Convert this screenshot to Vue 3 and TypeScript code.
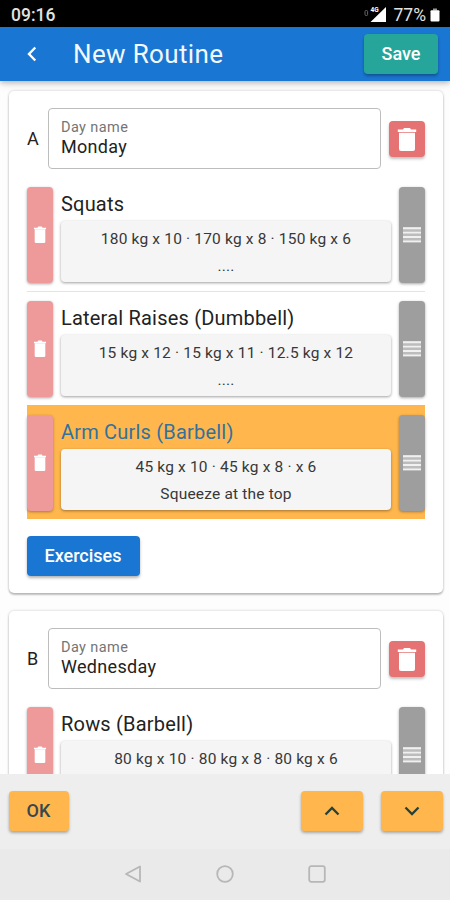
<script setup lang="ts">
interface Exercise {
  name: string
  sets: string
  note: string
  selected?: boolean
}

interface Day {
  letter: string
  name: string
  exercises: Exercise[]
}

const days: Day[] = [
  {
    letter: 'A',
    name: 'Monday',
    exercises: [
      { name: 'Squats', sets: '180 kg x 10 · 170 kg x 8 · 150 kg x 6', note: '....' },
      { name: 'Lateral Raises (Dumbbell)', sets: '15 kg x 12 · 15 kg x 11 · 12.5 kg x 12', note: '....' },
      { name: 'Arm Curls (Barbell)', sets: '45 kg x 10 · 45 kg x 8 · x 6', note: 'Squeeze at the top', selected: true },
    ],
  },
  {
    letter: 'B',
    name: 'Wednesday',
    exercises: [{ name: 'Rows (Barbell)', sets: '80 kg x 10 · 80 kg x 8 · 80 kg x 6', note: '' }],
  },
]
</script>

<template>
  <div class="screen">
    <div class="status">
      <span class="clock">09:16</span>
      <div class="indicators">
        <svg class="signal" viewBox="0 0 24 18" width="24" height="18">
          <rect x="2" y="5.5" width="2.6" height="5" rx="1" fill="none" stroke="#666" />
          <path d="M23 2V17H7.500Z" fill="#fff" />
          <text x="7.500" y="7" class="net">4G</text>
        </svg>
        <span class="percent">77%</span>
        <svg viewBox="0 0 10 14" width="10" height="14">
          <path d="M3 0.500H7V2.500H3Z" fill="#999" />
          <rect x="0.500" y="2.200" width="9" height="11.300" rx="1" fill="#fff" />
        </svg>
      </div>
    </div>

    <header class="appbar">
      <svg class="back" viewBox="0 0 12 16" width="12" height="16">
        <path d="M9.300 1.500L3 8L9.300 14.500" />
      </svg>
      <h1>New Routine</h1>
      <button class="btn save">Save</button>
    </header>

    <main class="content">
      <section v-for="day in days" :key="day.letter" class="card">
        <div class="day">
          <span class="letter">{{ day.letter }}</span>
          <label class="field">
            <span class="label">Day name</span>
            <span class="value">{{ day.name }}</span>
          </label>
          <button class="remove-day" aria-label="Remove day">
            <svg viewBox="0 0 20 24" width="20" height="24">
              <path d="M0.800 2.600H6L7 1H13L14 2.600H19.200V5H0.800Z" />
              <path d="M2 5.800H18V22Q18 24 16 24H4Q2 24 2 22Z" />
            </svg>
          </button>
        </div>

        <div class="rows">
          <div v-for="ex in day.exercises" :key="ex.name" class="row" :class="{ selected: ex.selected }">
            <button class="side remove" aria-label="Remove exercise">
              <svg viewBox="0 0 14 18" width="14" height="18">
                <path d="M1 1.700H4.500L5.200 0.500H8.800L9.500 1.700H13V3.300H1Z" />
                <path d="M1.700 3.300H12.300V15.800Q12.300 17 11.100 17H2.900Q1.700 17 1.700 15.800Z" />
              </svg>
            </button>
            <div class="body">
              <div class="name">{{ ex.name }}</div>
              <div class="sets">
                <div>{{ ex.sets }}</div>
                <div v-if="ex.note" class="note">{{ ex.note }}</div>
              </div>
            </div>
            <button class="side drag" aria-label="Reorder">
              <svg viewBox="0 0 18 16" width="18" height="16">
                <rect width="18" height="15.500" fill="#bcbcbc" />
                <path d="M0 1.200H18M0 5.600H18M0 10H18M0 14.400H18" stroke="#f0f0f0" stroke-width="1.900" />
              </svg>
            </button>
          </div>
        </div>

        <button v-if="day.exercises.length > 1" class="btn add">Exercises</button>
      </section>
    </main>

    <footer class="toolbar">
      <button class="btn amber ok">OK</button>
      <div class="movers">
        <button class="btn amber" aria-label="Move up">
          <svg viewBox="0 0 16 10" width="16" height="10"><path d="M1.500 8.500L8 2L14.500 8.500" /></svg>
        </button>
        <button class="btn amber" aria-label="Move down">
          <svg viewBox="0 0 16 10" width="16" height="10"><path d="M1.500 1.500L8 8L14.500 1.500" /></svg>
        </button>
      </div>
    </footer>

    <nav class="system">
      <svg viewBox="0 0 18 18" width="18" height="18"><path d="M16 1.500V16.500L2 9Z" /></svg>
      <svg viewBox="0 0 18 18" width="18" height="18"><circle cx="9" cy="9" r="7.800" /></svg>
      <svg viewBox="0 0 18 18" width="18" height="18"><rect x="1.200" y="1.200" width="15.600" height="15.600" rx="2" /></svg>
    </nav>
  </div>
</template>

<style>
body {
  margin: 0;
  overflow: hidden;
}
</style>

<style scoped>
.screen {
  width: 450px;
  height: 900px;
  display: flex;
  flex-direction: column;
  overflow: hidden;
  background: #fdfdfd;
  color: #222;
  font-family: Roboto, sans-serif;
}
button {
  border: 0;
  padding: 0;
  margin: 0;
  font-family: inherit;
  display: flex;
  align-items: center;
  justify-content: center;
  flex: none;
}
svg {
  display: block;
  flex: none;
}
.status {
  flex: none;
  height: 27px;
  box-sizing: border-box;
  padding: 2px 10px 0 11px;
  background: #000;
  color: #e2e2e2;
  display: flex;
  align-items: center;
  justify-content: space-between;
}
.clock {
  font-size: 17.5px;
  font-weight: 500;
}
.indicators {
  display: flex;
  align-items: center;
}
.signal {
  margin-right: 7px;
  margin-top: -2px;
}
.net {
  font-size: 6.5px;
  font-weight: 700;
  fill: #fff;
}
.percent {
  font-size: 17.5px;
  margin-right: 4px;
}
.appbar {
  flex: none;
  position: relative;
  z-index: 1;
  height: 54px;
  box-sizing: border-box;
  padding: 0 12px 0 26px;
  background: #1976d2;
  display: flex;
  align-items: center;
  box-shadow: 0 2px 5px rgba(0, 0, 0, 0.22), 0 3px 10px rgba(0, 0, 0, 0.08);
}
.back path {
  fill: none;
  stroke: #fff;
  stroke-width: 2.4;
}
h1 {
  margin: 0 auto 0 35px;
  color: #f2f8ff;
  font-size: 26px;
  font-weight: 400;
  letter-spacing: 0.35px;
}
.btn {
  height: 40px;
  box-sizing: border-box;
  padding-bottom: 2px;
  border-radius: 4px;
  font-size: 18px;
  font-weight: 500;
  color: #fff;
  box-shadow: 0 2px 3px rgba(0, 0, 0, 0.3);
}
.save {
  width: 74px;
  background: #26a69a;
}
.content {
  flex: 1;
  min-height: 0;
  overflow: hidden;
  padding: 10px 7px 0 9px;
}
.card {
  height: 502px;
  box-sizing: border-box;
  padding: 17px 18px 0;
  margin-bottom: 18px;
  border-radius: 5px;
  background: #fff;
  box-shadow: 0 2px 2px rgba(0, 0, 0, 0.22), 0 0 3px rgba(0, 0, 0, 0.2);
}
.day {
  display: flex;
  align-items: center;
  height: 61px;
}
.letter {
  width: 21px;
  padding-bottom: 1px;
  font-size: 18px;
}
.field {
  flex: 1;
  height: 61px;
  box-sizing: border-box;
  border: 1px solid #bdbdbd;
  border-radius: 4px;
  padding: 10px 12px 0;
  display: flex;
  flex-direction: column;
}
.label {
  font-size: 14.5px;
  line-height: 18px;
  color: #757575;
  letter-spacing: 0.4px;
}
.value {
  font-size: 18px;
  line-height: 20px;
  letter-spacing: 0.3px;
}
.remove-day {
  width: 36px;
  height: 36px;
  margin-left: 8px;
  border-radius: 4px;
  background: #e57373;
  box-shadow: 0 2px 3px rgba(0, 0, 0, 0.25);
}
.remove-day path,
.remove path {
  fill: #fff;
}
.rows {
  padding-top: 9px;
}
.row {
  height: 114px;
  box-sizing: border-box;
  padding: 9px 0 8px;
  border-bottom: 1px solid #e4e4e4;
  display: flex;
  gap: 8px;
}
.row:nth-child(2) {
  border-bottom-color: #ffb74d;
}
.row.selected {
  height: 113px;
  background: #ffb74d;
  border-bottom-color: #ffb74d;
}
.side {
  width: 26px;
  height: 96px;
  border-radius: 4px;
  box-shadow: 0 1px 3px rgba(0, 0, 0, 0.35);
}
.remove {
  background: #ef9a9a;
}
.drag {
  background: #9e9e9e;
}
.body {
  flex: 1;
}
.name {
  height: 34px;
  line-height: 34px;
  font-size: 20px;
  letter-spacing: 0.2px;
}
.selected .name {
  color: #33719f;
}
.sets {
  height: 61px;
  box-sizing: border-box;
  padding-top: 4px;
  border-radius: 4px;
  background: #f5f5f5;
  box-shadow: 0 1px 3px rgba(0, 0, 0, 0.38);
  color: #383838;
  font-size: 15.5px;
  line-height: 29px;
  text-align: center;
  letter-spacing: 0.18px;
}
.note {
  line-height: 24px;
}
.add {
  width: 113px;
  margin-top: 17px;
  padding-right: 1px;
  background: #1976d2;
}
.toolbar {
  flex: none;
  height: 75px;
  box-sizing: border-box;
  padding: 0 7px 1px 9px;
  background: #eee;
  display: flex;
  align-items: center;
  justify-content: space-between;
}
.movers {
  display: flex;
  gap: 18px;
}
.amber {
  width: 62px;
  padding-bottom: 1px;
  background: #ffb74d;
  color: #37474f;
}
.ok {
  width: 60px;
  padding-right: 1px;
}
.amber path {
  fill: none;
  stroke: #264238;
  stroke-width: 2.3;
}
.system {
  flex: none;
  height: 51px;
  box-sizing: border-box;
  padding: 0 0 2px;
  background: #eaeaea;
  display: flex;
  align-items: center;
  justify-content: center;
  gap: 74px;
}
.system path,
.system circle,
.system rect {
  fill: none;
  stroke: #b7b7b7;
  stroke-width: 1.8;
  stroke-linejoin: round;
}
</style>
